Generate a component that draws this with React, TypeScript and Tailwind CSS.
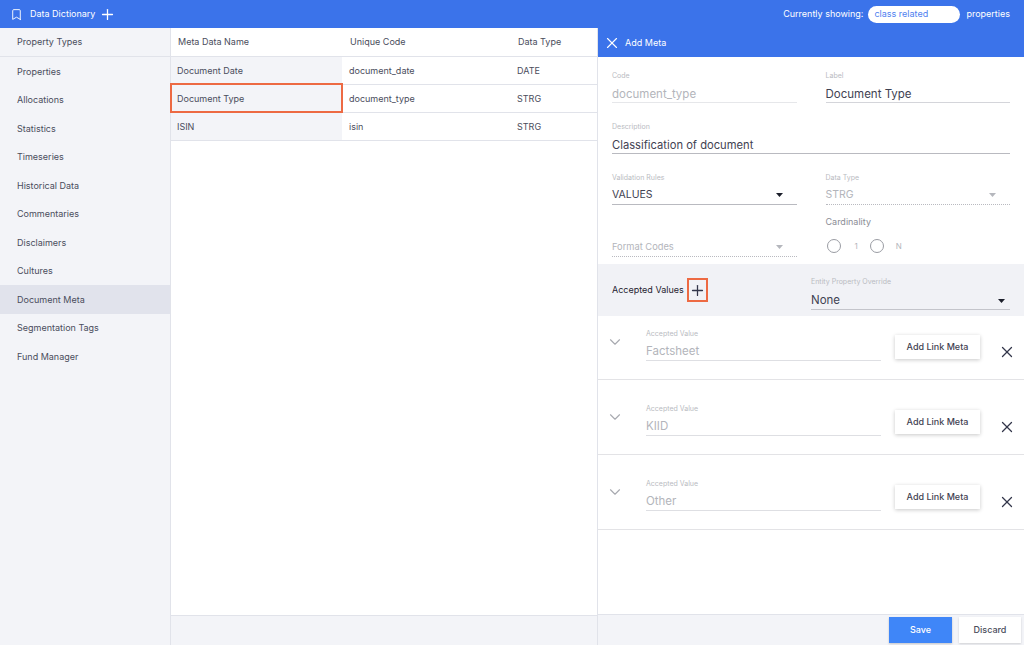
import { Bookmark, ChevronDown, Plus, X } from "lucide-react";

const NAV = [
  "Properties",
  "Allocations",
  "Statistics",
  "Timeseries",
  "Historical Data",
  "Commentaries",
  "Disclaimers",
  "Cultures",
  "Document Meta",
  "Segmentation Tags",
  "Fund Manager",
];

const ROWS = [
  ["Document Date", "document_date", "DATE"],
  ["Document Type", "document_type", "STRG"],
  ["ISIN", "isin", "STRG"],
];

function Caret({ muted = false }: { muted?: boolean }) {
  return (
    <svg width="7" height="4" viewBox="0 0 7 4" aria-hidden className="block">
      <path d="M0 0h7L3.5 4z" fill={muted ? "#b5b7bd" : "#1c1f2b"} />
    </svg>
  );
}

function Field({
  label,
  value,
  muted = false,
  line = "border-b border-[#d4d5da]",
  caret,
  size = "text-[11.5px] pt-[3px]",
}: {
  label: string;
  value: string;
  muted?: boolean;
  line?: string;
  caret?: "dark" | "muted";
  size?: string;
}) {
  return (
    <div>
      <div className="h-[11px] text-[7px] leading-[11px] text-[#b9bbc1]">{label}</div>
      <div className={`mt-[3px] flex h-[19px] items-center justify-between ${line}`}>
        <span className={`${size} ${muted ? "text-[#b3b5bb]" : "text-[#3f4252]"}`}>{value}</span>
        {caret && (
          <span className="mr-[14px]">
            <Caret muted={caret === "muted"} />
          </span>
        )}
      </div>
    </div>
  );
}

function AcceptedRow({ value, first = false }: { value: string; first?: boolean }) {
  return (
    <div
      className={`flex shrink-0 items-start border-b border-[#e3e3e6] pl-[8px] ${
        first ? "h-[64px] pt-[12px]" : "h-[75px] pt-[23px]"
      }`}
    >
      <ChevronDown className="mt-[5px] h-[18px] w-[18px] text-[#a8aab0]" strokeWidth={1.5} />
      <div className="ml-[22px] w-[235px]">
        <div className="h-[11px] text-[7px] leading-[11px] text-[#b9bbc1]">Accepted Value</div>
        <div className="mt-[1px] flex h-[21px] items-center border-b border-[#dedfe3] pt-[3px] text-[11.5px] text-[#b3b5bb]">
          {value}
        </div>
      </div>
      <button className="ml-[14px] mt-[7px] h-[24px] w-[85px] bg-white text-[9px] font-medium text-[#3f4252] shadow-[0_1px_4px_rgba(0,0,0,0.22)]">
        Add Link Meta
      </button>
      <X className="ml-[18px] mt-[15px] h-[18px] w-[18px] text-[#33364a]" strokeWidth={1.7} />
    </div>
  );
}

export default function App() {
  return (
    <div className="flex h-[645px] w-[1024px] flex-col overflow-hidden bg-white font-['Inter',sans-serif] text-[#4a4d5c]">
      <header className="flex h-[28px] shrink-0 items-center bg-[#3b73ea] text-[9px] text-white">
        <Bookmark className="ml-[10px] h-[13px] w-[13px]" strokeWidth={1.7} />
        <span className="ml-[7px]">Data Dictionary</span>
        <Plus className="ml-[4px] h-[17px] w-[17px]" strokeWidth={1.8} />
        <span className="ml-auto">Currently showing:</span>
        <span className="ml-[5px] flex h-[17px] w-[92px] items-center rounded-full bg-white pl-[6px] text-[#4f7ff0]">
          class related
        </span>
        <span className="ml-[6px] mr-[14px]">properties</span>
      </header>

      <div className="flex min-h-0 flex-1">
        <nav className="w-[170px] shrink-0 bg-[#f3f4f8] text-[9px]">
          <div className="flex h-[29px] items-center border-b border-[#e1e3ea] pl-[17px]">Property Types</div>
          {NAV.map((item) => (
            <div
              key={item}
              className={`flex h-[28.5px] items-center pl-[17px] ${item === "Document Meta" ? "bg-[#e1e3ec]" : ""}`}
            >
              {item}
            </div>
          ))}
        </nav>

        <main className="flex w-[428px] shrink-0 flex-col border-x border-[#e1e3ea] text-[9px]">
          <div className="flex h-[29px] shrink-0 items-center border-b border-[#e1e3ea]">
            <div className="w-[171px] pl-[7px]">Meta Data Name</div>
            <div className="w-[168px] pl-[8px]">Unique Code</div>
            <div className="pl-[8px]">Data Type</div>
          </div>
          {ROWS.map(([name, code, type], i) => (
            <div key={code} className="relative flex h-[28px] shrink-0 items-center border-b border-[#e1e3ea]">
              <div className="flex h-full w-[171px] items-center bg-[#f3f4f8] pl-[6px]">{name}</div>
              <div className="w-[168px] pl-[7px]">{code}</div>
              <div className="pl-[7px]">{type}</div>
              {i === 1 && (
                <div className="absolute -left-[1px] -top-[2px] h-[30px] w-[173px] border-2 border-[#ed6a43]" />
              )}
            </div>
          ))}
          <div className="flex-1" />
          <div className="h-[30px] shrink-0 border-t border-[#e1e3ea] bg-[#f3f4f8]" />
        </main>

        <aside className="flex min-w-0 flex-1 flex-col">
          <div className="flex h-[29px] shrink-0 items-center bg-[#3b73ea] pl-[5px] text-[9px] text-white">
            <X className="h-[18px] w-[18px]" strokeWidth={1.5} />
            <span className="ml-[4px]">Add Meta</span>
          </div>
          <div className="grid shrink-0 grid-cols-2 gap-x-[29px] px-[14px] pt-[13px]">
            <Field label="Code" value="document_type" muted line="border-b border-[#e6e7ea]" />
            <Field label="Label" value="Document Type" />
            <div className="col-span-2 mt-[18px]">
              <Field
                label="Description"
                value="Classification of document"
                size="text-[11.2px] pt-[3px]"
                line="border-b border-[#b9bac0]"
              />
            </div>
            <div className="mt-[18px]">
              <Field
                label="Validation Rules"
                value="VALUES"
                size="text-[10.5px] pb-[1px]"
                caret="dark"
                line="border-b border-[#b9bac0]"
              />
            </div>
            <div className="mt-[18px]">
              <Field
                label="Data Type"
                value="STRG"
                size="text-[10.5px] pb-[1px]"
                muted
                caret="muted"
                line="border-b border-dotted border-[#b9bac0]"
              />
            </div>
            <div className="mt-[10px] flex h-[42px] items-end">
              <div className="flex h-[21px] w-full items-center justify-between border-b border-dotted border-[#b9bac0] pt-[2px] text-[9.3px] text-[#b3b5bb]">
                Format Codes
                <span className="mr-[14px]">
                  <Caret muted />
                </span>
              </div>
            </div>
            <div className="mt-[10px] h-[42px]">
              <div className="text-[9px] text-[#8b8d96]">Cardinality</div>
              <div className="mt-[10px] flex items-center text-[8px] text-[#b3b5bb]">
                <span className="ml-[1px] h-[14px] w-[14px] rounded-full border border-[#9a9ca3]" />
                <span className="ml-[14px]">1</span>
                <span className="ml-[12px] h-[14px] w-[14px] rounded-full border border-[#9a9ca3]" />
                <span className="ml-[12px]">N</span>
              </div>
            </div>
          </div>

          <div className="mt-[7px] grid h-[52px] shrink-0 grid-cols-[199px_1fr] bg-[#f1f2f6] px-[14px]">
            <div className="flex items-center text-[9px] text-[#1f2230]">
              Accepted Values
              <span className="ml-[3px] flex h-[24px] w-[21px] items-center justify-center border-2 border-[#ed6a43]">
                <Plus className="h-[17px] w-[17px] text-[#33364a]" strokeWidth={1.8} />
              </span>
            </div>
            <div className="pt-[12px]">
              <div className="h-[11px] text-[7px] leading-[11px] text-[#b9bbc1]">Entity Property Override</div>
              <div className="mt-[4px] flex h-[19px] items-center justify-between border-b border-[#c4c5cb] pt-[2px] text-[11.5px] text-[#3f4252]">
                None
                <span className="mr-[5px]">
                  <Caret />
                </span>
              </div>
            </div>
          </div>

          <AcceptedRow value="Factsheet" first />
          <AcceptedRow value="KIID" />
          <AcceptedRow value="Other" />

          <div className="flex-1" />
          <div className="flex h-[31px] shrink-0 items-center justify-end border-t border-[#e1e3ea] bg-[#f3f4f8] text-[9px] font-medium">
            <button className="h-[26px] w-[63px] bg-[#3f86f8] text-white shadow-[0_1px_2px_rgba(0,0,0,0.2)]">
              Save
            </button>
            <button className="ml-[7px] mr-[3px] h-[26px] w-[62px] bg-white text-[#4a4d5c] shadow-[0_1px_2px_rgba(0,0,0,0.15)]">
              Discard
            </button>
          </div>
        </aside>
      </div>
    </div>
  );
}
